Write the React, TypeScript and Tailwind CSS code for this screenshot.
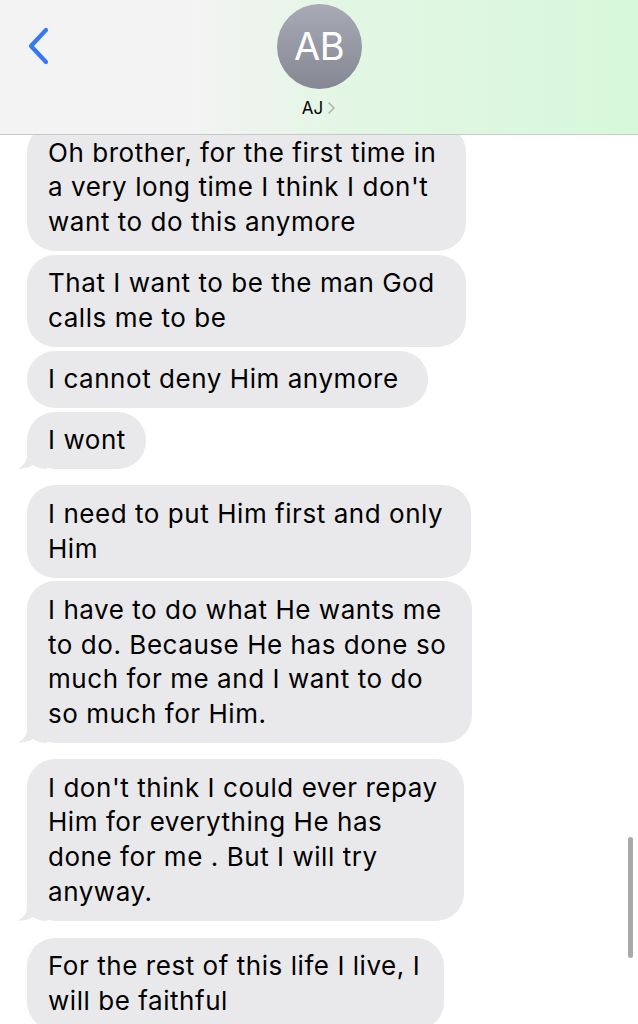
import { ReactNode } from "react";

type Msg = { lines: string[]; w: string; tail?: boolean };

const groups: Msg[][] = [
  [
    { lines: ["Oh brother, for the first time in", "a very long time I think I don't", "want to do this anymore"], w: "w-[439px]" },
    { lines: ["That I want to be the man God", "calls me to be"], w: "w-[439px]" },
    { lines: ["I cannot deny Him anymore"], w: "w-[401px]" },
    { lines: ["I wont"], w: "w-[119px]", tail: true },
  ],
  [
    { lines: ["I need to put Him first and only", "Him"], w: "w-[444px]" },
    { lines: ["I have to do what He wants me", "to do. Because He has done so", "much for me and I want to do", "so much for Him."], w: "w-[445px]", tail: true },
  ],
  [
    { lines: ["I don't think I could ever repay", "Him for everything He has", "done for me . But I will try", "anyway."], w: "w-[437px]", tail: true },
  ],
  [
    { lines: ["For the rest of this life I live, I", "will be faithful"], w: "w-[417px]" },
  ],
];

function Tail() {
  return (
    <svg className="absolute -left-[10px] bottom-0" width="30" height="24" viewBox="0 0 30 24">
      <path d="M10 0 L10 10 C10 17 6 21 1 23.4 C7 24 12 22.6 16 20 C20 22.6 25 24 30 24 L30 0 Z" fill="#e9e9eb" />
    </svg>
  );
}

function Bubble({ m }: { m: Msg }) {
  return (
    <div className={`relative ${m.w} rounded-[28px] bg-[#e9e9eb] pl-[21px] pr-3 py-[11.5px]`}>
      {m.tail && <Tail />}
      <div className="relative text-[26px] leading-[34.7px] tracking-[0.55px] text-black whitespace-nowrap">
        {m.lines.map((l, i) => (
          <div key={i}>{l}</div>
        ))}
      </div>
    </div>
  );
}

function Header({ children }: { children?: ReactNode }) {
  return (
    <div className="absolute top-0 left-0 right-0 h-[135px] border-b border-[#c9c9c9] bg-gradient-to-r from-[#f3f3f3] from-30% via-[#e2f6e4] via-55% to-[#d7f8da]">
      <div className="flex items-start">
        <div className="pl-[26px] pt-[26px]">
          <svg width="26" height="40" viewBox="0 0 26 40">
            <path d="M20 4 L5 20 L20 36" fill="none" stroke="#3478f6" strokeWidth="4.2" strokeLinecap="round" strokeLinejoin="round" />
          </svg>
        </div>
      </div>
      <div className="absolute left-0 right-0 top-[4px] flex flex-col items-center">
        <div className="w-[85px] h-[85px] rounded-full bg-gradient-to-b from-[#a8abb5] to-[#858893] flex items-center justify-center text-white text-[38px] font-normal tracking-[-0.5px]">
          AB
        </div>
        <div className="mt-[8px] flex items-center gap-[4px] text-[17px] leading-[22px] text-black">
          <span>AJ</span>
          <svg width="9" height="14" viewBox="0 0 9 14">
            <path d="M2 2 L7 7 L2 12" fill="none" stroke="#b3b3b3" strokeWidth="1.6" strokeLinecap="round" strokeLinejoin="round" />
          </svg>
        </div>
      </div>
      {children}
    </div>
  );
}

export default function App() {
  return (
    <div className="relative w-full h-[1024px] overflow-hidden bg-white" style={{ fontFamily: "Inter, 'Noto Sans', sans-serif" }}>
      <div className="flex flex-col pt-[124px] pl-[27px]">
        {groups.map((g, gi) => (
          <div key={gi} className={`flex flex-col gap-[3.5px] ${gi === 0 ? "" : gi === 3 ? "mt-[17px]" : "mt-[16px]"}`}>
            {g.map((m, i) => (
              <Bubble key={i} m={m} />
            ))}
          </div>
        ))}
      </div>
      <Header />
      <div className="absolute left-[628px] top-[837px] w-[5px] h-[121px] rounded-full bg-[#a9a9a9]" />
    </div>
  );
}
